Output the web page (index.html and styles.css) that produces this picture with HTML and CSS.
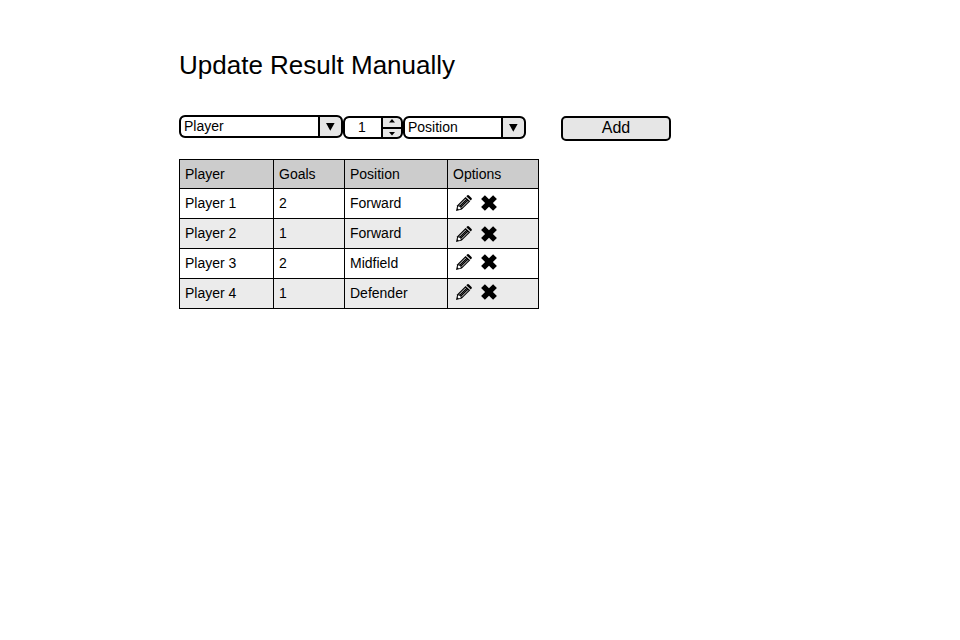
FILE: index.html
```html
<!DOCTYPE html>
<html lang="en">
<head>
<meta charset="utf-8">
<title>Update Result Manually</title>
<link rel="stylesheet" href="styles.css">
</head>
<body>
<svg class="defs" aria-hidden="true">
  <symbol id="pencil" viewBox="0 0 16 16">
    <path d="M0 16 1.3 10.2 9.6 1.9 14.2 6.3 5.8 14.6Z"/>
    <path d="M10.3 1.2 11.3.3Q12.2-.3 13 .4L15.5 2.9Q16.2 3.7 15.6 4.5L14.8 5.5Z"/>
    <path class="groove" d="M3.2 10.5 9.8 3.9M5.6 12.8 12.2 6.2"/>
    <path class="shine" d="M4.5 11.5 11 5"/>
    <path class="tip" d="M2.2 11.3 1.6 13.2 2.8 14.4 4.8 13.8 4.2 12Z"/>
  </symbol>
  <symbol id="cross" viewBox="0 0 16 16">
    <path d="M3.9.3 8 4.2 12.1.3 15.9 4 11.9 8 15.9 12 12.1 15.7 8 11.8 3.9 15.7.1 12 4.1 8 .1 4Z"/>
  </symbol>
</svg>
<main class="page">
  <h1 class="title">Update Result Manually</h1>
  <div class="controls">
    <div class="field player">
      <span class="value">Player</span>
      <span class="drop"><svg width="9" height="8" viewBox="0 0 9 8"><path d="M0 0H8.6L4.3 7.8Z"/></svg></span>
    </div>
    <div class="field goals">
      <span class="value">1</span>
      <span class="steps">
        <span class="step"><svg width="6" height="4" viewBox="0 0 6 4"><path d="M3 0 6 3.6H0Z"/></svg></span>
        <span class="step"><svg width="6" height="4" viewBox="0 0 6 4"><path d="M0 0H6L3 3.6Z"/></svg></span>
      </span>
    </div>
    <div class="field position">
      <span class="value">Position</span>
      <span class="drop"><svg width="9" height="8" viewBox="0 0 9 8"><path d="M0 0H8.6L4.3 7.8Z"/></svg></span>
    </div>
    <button class="add">Add</button>
  </div>
  <div class="table">
    <div class="cell head">Player</div><div class="cell head">Goals</div><div class="cell head">Position</div><div class="cell head">Options</div>
    <div class="cell">Player 1</div><div class="cell">2</div><div class="cell">Forward</div>
    <div class="cell options"><svg class="icon"><use href="#pencil"/></svg><svg class="icon"><use href="#cross"/></svg></div>
    <div class="cell alt">Player 2</div><div class="cell alt">1</div><div class="cell alt">Forward</div>
    <div class="cell alt options low"><svg class="icon"><use href="#pencil"/></svg><svg class="icon"><use href="#cross"/></svg></div>
    <div class="cell">Player 3</div><div class="cell">2</div><div class="cell">Midfield</div>
    <div class="cell options high"><svg class="icon"><use href="#pencil"/></svg><svg class="icon"><use href="#cross"/></svg></div>
    <div class="cell alt">Player 4</div><div class="cell alt">1</div><div class="cell alt">Defender</div>
    <div class="cell alt options high"><svg class="icon"><use href="#pencil"/></svg><svg class="icon"><use href="#cross"/></svg></div>
  </div>
</main>
</body>
</html>
```
FILE: styles.css
```css
* { box-sizing: border-box; }
body {
  margin: 0;
  background: #fff;
  color: #000;
  font: 14px/16px "Liberation Sans", Arial, sans-serif;
}
.defs { display: none; }
svg { display: block; }
.page { padding: 50px 0 0 179px; }
.title {
  margin: 0;
  font-size: 26px;
  font-weight: 400;
  line-height: 30px;
}
.controls {
  display: flex;
  align-items: flex-start;
  height: 44px;
  margin-top: 35px;
}
.field {
  display: flex;
  height: 23px;
  margin-top: 1px;
  border: 2px solid #000;
  border-radius: 6px;
  background: #000;
  overflow: hidden;
}
.value {
  flex: 1;
  padding-left: 3px;
  border-radius: 4px 0 0 4px;
  background: #fff;
  line-height: 18px;
}
.player { width: 164px; margin-top: 0; }
.goals { width: 60px; }
.position { width: 123px; }
.goals .value { padding: 0 2px 0 0; text-align: center; }
.drop {
  width: 23px;
  padding: 6px 0 0 6px;
  border-left: 2px solid #000;
  border-radius: 0 4px 4px 0;
  background: #e6e6e6;
}
.steps {
  display: flex;
  flex-direction: column;
  width: 20px;
  border-left: 2px solid #000;
  border-radius: 0 4px 4px 0;
  background: #e6e6e6;
}
.step {
  height: 9px;
  padding: 1px 0 0 6px;
}
.step + .step {
  height: 10px;
  padding-top: 3px;
  border-top: 2px solid #000;
}
.add {
  width: 110px;
  height: 25px;
  margin: 1px 0 0 35px;
  padding: 0 0 2px;
  border: 2px solid #000;
  border-radius: 5px;
  background: #e6e6e6;
  color: #000;
  font: 16px/19px "Liberation Sans", Arial, sans-serif;
}
.table {
  display: grid;
  grid-template-columns: 93px 70px 102px 90px;
  grid-template-rows: 28px repeat(4, 29px);
  gap: 1px;
  width: 360px;
  padding: 1px;
  background: #000;
}
.cell {
  padding: 6px 5px 0;
  background: #fff;
}
.alt { background: #ebebeb; }
.head { background: #ccc; }
.options {
  display: flex;
  gap: 9px;
  padding: 6px 0 0 8px;
}
.low { padding-top: 7px; }
.high { padding-top: 5px; }
.icon { width: 16px; height: 16px; }
.groove { fill: none; stroke: #fff; stroke-width: .85; }
.shine { fill: none; stroke: #999; stroke-width: .4; }
.tip { fill: #fff; }
```
